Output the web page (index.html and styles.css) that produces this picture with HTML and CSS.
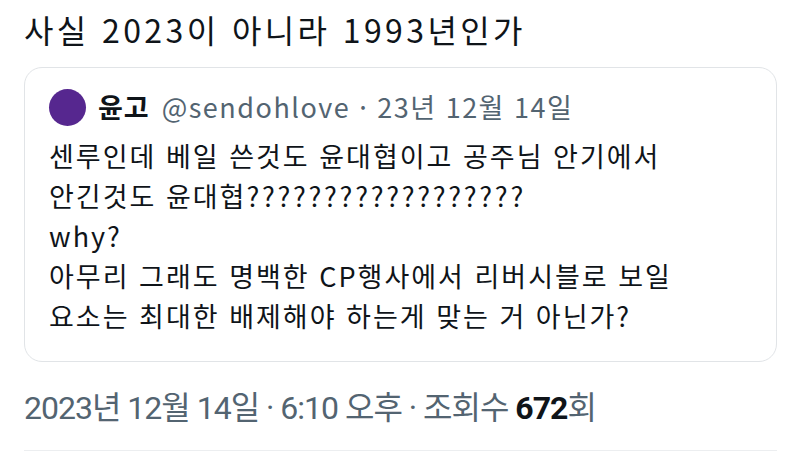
FILE: index.html
```html
<!DOCTYPE html>
<html lang="ko">
<head>
  <meta charset="UTF-8" />
  <title>게시물</title>
  <link rel="stylesheet" href="styles.css">
</head>
<body>

  <article class="post">
    <!-- Post text -->
    <p class="post-text">사실 2023이 아니라 1993년인가</p>

    <!-- Quoted post -->
    <div class="quote">
      <div class="quote-head">
        <span class="avatar"></span>
        <span class="name">윤고</span>
        <span class="handle">@sendohlove · 23년 12월 14일</span>
      </div>
      <p class="quote-text">센루인데 베일 쓴것도 윤대협이고 공주님 안기에서<br>안긴것도 윤대협<span class="marks">??????????????????</span><br>why?<br>아무리 그래도 명백한 CP행사에서 리버시블로 보일<br>요소는 최대한 배제해야 하는게 맞는 거 아닌가?</p>
    </div>

    <!-- Meta line -->
    <div class="meta">2023년 12월 14일 · 6:10 오후 · 조회수 <b>672</b>회</div>
  </article>

</body>
</html>
```

FILE: styles.css
```css
/* === Body === */
body {
  margin: 0;
  background: #ffffff;
  font-family: 'Noto Sans CJK KR', 'Noto Sans', sans-serif;
  color: #0f1419;
}

/* === Post === */
.post {
  padding: 0 23px 0 24px;
}

.post-text {
  margin: 0;
  padding-top: 7px;
  font-size: 32px;
  line-height: 44px;
  letter-spacing: 3.4px;
}

/* === Quote card === */
.quote {
  margin-top: 16px;
  border: 1px solid #e1e4e7;
  border-radius: 18px;
  padding: 19px 24px 25px 24px;
}

.quote-head {
  display: flex;
  align-items: center;
  gap: 12px;
  font-size: 27px;
  line-height: 40px;
}

.avatar {
  width: 37px;
  height: 37px;
  border-radius: 50%;
  background: #56278f;
  flex-shrink: 0;
}

.name {
  font-weight: 700;
  letter-spacing: 1px;
}

.handle {
  color: #536471;
  letter-spacing: 1.5px;
}

.quote-text {
  margin: 9px 0 0;
  font-size: 27px;
  line-height: 40px;
  letter-spacing: 2px;
}

.quote-text .marks {
  letter-spacing: 2.7px;
}

/* === Meta === */
.meta {
  margin-top: 28px;
  padding-bottom: 24px;
  border-bottom: 1px solid #eceef0;
  font-family: Roboto, 'Noto Sans CJK KR', sans-serif;
  font-size: 32px;
  line-height: 36px;
  color: #536471;
  letter-spacing: -1px;
}

.meta b {
  color: #0f1419;
  font-weight: 700;
}
```
